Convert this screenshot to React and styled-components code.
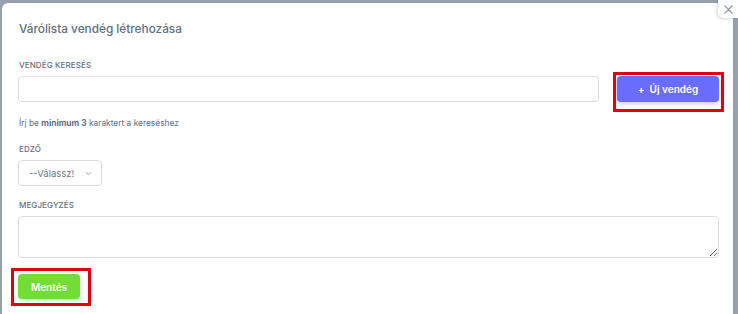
import styled, { createGlobalStyle } from 'styled-components'

const GlobalStyle = createGlobalStyle`
    html, body {
        margin: 0;
        padding: 0;
        overflow: hidden;
    }
    body {
        font-family: Inter, "Noto Sans", sans-serif;
        background: #97a1ae;
    }
`

const Backdrop = styled.div`
    width: 738px;
    height: 314px;
    box-sizing: border-box;
    padding: 3px 5px 0 2px;
    background: #97a1ae;
    overflow: hidden;
    position: relative;
`

const Modal = styled.div`
    position: relative;
    background: #fff;
    border-radius: 6px 6px 0 0;
    padding: 18px 14px 0 16px;
    height: 340px;
    box-sizing: border-box;
`

const CloseButton = styled.button`
    position: absolute;
    top: 0;
    right: 0;
    width: 20px;
    height: 18px;
    border: none;
    padding: 0;
    background: #fff;
    border-radius: 0 0 0 5px;
    box-shadow: -1px 1px 3px rgba(67, 89, 113, 0.25);
    display: flex;
    align-items: center;
    justify-content: center;
    z-index: 2;
`

const Title = styled.h5`
    margin: 0 0 0 1px;
    font-size: 11.8px;
    line-height: 16px;
    font-weight: 500;
    color: #5f6f82;
`

const Label = styled.label`
    display: block;
    margin: ${p => p.$top || 0}px 0 5px 1px;
    font-size: 8px;
    line-height: 12px;
    font-weight: 500;
    text-transform: uppercase;
    letter-spacing: 0.1px;
    color: #5f6f82;
`

const SearchRow = styled.div`
    display: flex;
    gap: 18px;
    align-items: flex-start;
`

const TextInput = styled.input`
    flex: 1;
    height: 26px;
    box-sizing: border-box;
    border: 1px solid #d9dee3;
    border-radius: 4px;
    font: inherit;
    font-size: 10px;
    padding: 0 10px;
    outline: none;
`

const Annotated = styled.div`
    position: relative;
    &::after {
        content: '';
        position: absolute;
        inset: ${p => p.$inset};
        border: 3px solid #e3000f;
        pointer-events: none;
    }
`

const Button = styled.button`
    height: ${p => p.$h}px;
    width: ${p => p.$w}px;
    border: none;
    border-radius: 4px;
    background: ${p => p.$color};
    color: #fff;
    font-family: Inter, "Noto Sans", sans-serif;
    font-size: 10px;
    font-weight: 600;
    display: flex;
    align-items: center;
    justify-content: center;
    gap: 5px;
    box-shadow: 0 2px 4px ${p => p.$shadow};
    padding: 0;
`

const Hint = styled.div`
    margin: 15px 0 0 1px;
    font-size: 8.4px;
    line-height: 12px;
    color: #5f6f82;
    b {
        font-weight: 700;
    }
`

const Select = styled.div`
    width: 84px;
    height: 26px;
    box-sizing: border-box;
    border: 1px solid #d9dee3;
    border-radius: 4px;
    display: flex;
    align-items: center;
    justify-content: space-between;
    padding: 0 9px 0 10px;
    font-size: 9.5px;
    color: #697a8d;
`

const TextArea = styled.textarea`
    display: block;
    width: 100%;
    height: 42px;
    box-sizing: border-box;
    border: 1px solid #d9dee3;
    border-radius: 4px;
    font: inherit;
    resize: vertical;
    outline: none;
`

const Footer = styled.div`
    margin-top: 16px;
    display: flex;
`

function App() {
    return (
        <>
            <GlobalStyle />
            <Backdrop>
                <CloseButton aria-label="Bezárás">
                    <svg width="9" height="9" viewBox="0 0 10 10">
                        <path d="M1 1 L9 9 M9 1 L1 9" stroke="#8592a3" strokeWidth="1.4" strokeLinecap="round" />
                    </svg>
                </CloseButton>
                <Modal>
                    <Title>Várólista vendég létrehozása</Title>
                    <Label $top={22}>Vendég keresés</Label>
                    <SearchRow>
                        <TextInput type="text" />
                        <Annotated $inset="-4px -5px -10px -4px">
                            <Button $w={102} $h={26} $color="#696cff" $shadow="rgba(105,108,255,0.35)">
                                <span>+</span>
                                <span>Új vendég</span>
                            </Button>
                        </Annotated>
                    </SearchRow>
                    <Hint>Írj be <b>minimum 3</b> karaktert a kereséshez</Hint>
                    <Label $top={14}>Edző</Label>
                    <Select>
                        <span>--Válassz!</span>
                        <svg width="7" height="5" viewBox="0 0 8 5">
                            <path d="M1 1 L4 4 L7 1" fill="none" stroke="#8592a3" strokeWidth="1" />
                        </svg>
                    </Select>
                    <Label $top={13}>Megjegyzés</Label>
                    <TextArea />
                    <Footer>
                        <Annotated $inset="-6px -11px -7px -7px">
                            <Button $w={62} $h={25} $color="#71dd37" $shadow="rgba(113,221,55,0.35)">
                                Mentés
                            </Button>
                        </Annotated>
                    </Footer>
                </Modal>
            </Backdrop>
        </>
    )
}

export default App
